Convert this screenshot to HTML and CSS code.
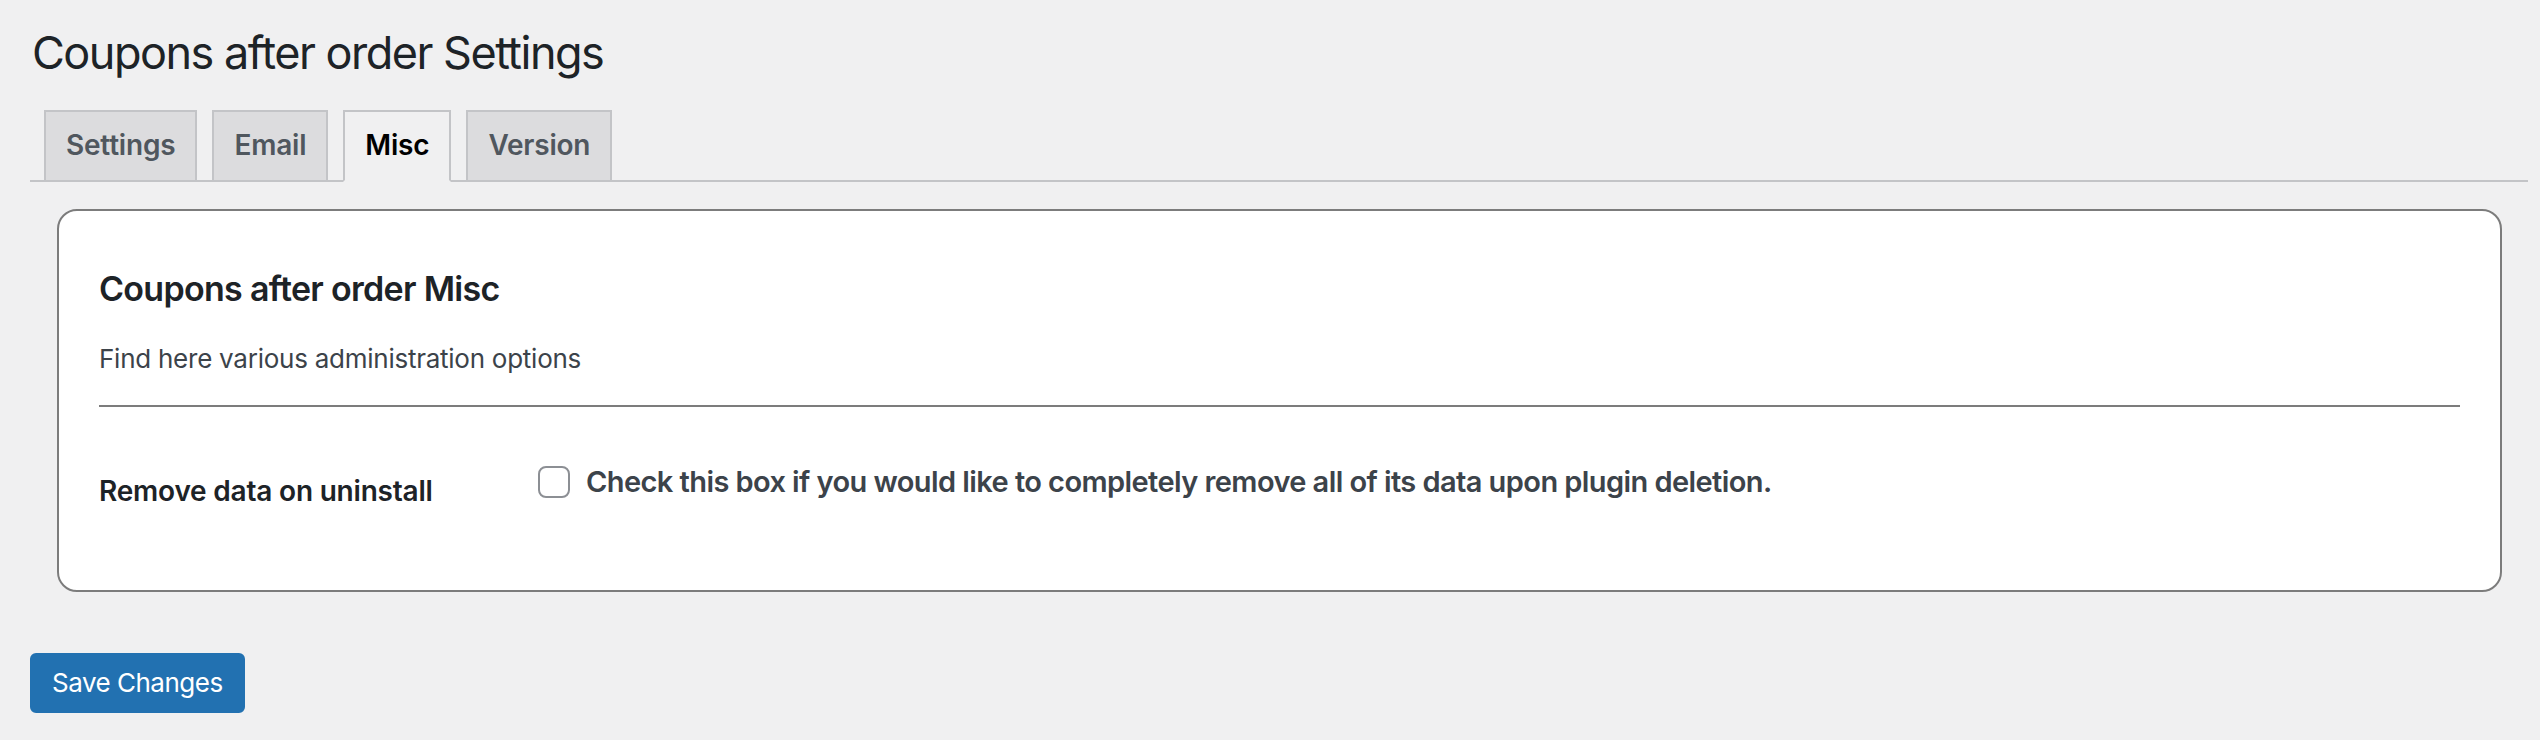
FILE: index.html
```html
<!DOCTYPE html>
<html lang="en">
<head>
<meta charset="utf-8">
<title>Coupons after order Settings</title>
<link rel="stylesheet" href="styles.css">
</head>
<body>
<div class="wrap">
  <h1 class="page-title">Coupons after order Settings</h1>
  <nav class="tabs">
    <a class="tab">Settings</a>
    <a class="tab">Email</a>
    <a class="tab tab-active">Misc</a>
    <a class="tab">Version</a>
  </nav>
  <form class="settings-form">
    <section class="card">
      <h2 class="card-title">Coupons after order Misc</h2>
      <p class="card-desc">Find here various administration options</p>
      <hr class="card-rule">
      <div class="row">
        <div class="row-label">Remove data on uninstall</div>
        <label class="row-field">
          <span class="checkbox"></span>
          <span class="check-text">Check this box if you would like to completely remove all of its data upon plugin deletion.</span>
        </label>
      </div>
    </section>
    <button type="button" class="btn-primary">Save Changes</button>
  </form>
</div>
</body>
</html>
```

FILE: styles.css
```css
html, body {
  margin: 0;
  padding: 0;
  background: #f0f0f1;
}
body {
  font-family: Inter, "Noto Sans", "Liberation Sans", sans-serif;
  color: #3c434a;
}
.wrap {
  padding: 23px 12px 0 30px;
}
.page-title {
  margin: 0;
  padding: 0 0 0 2px;
  font-size: 45px;
  font-weight: 400;
  line-height: 60px;
  letter-spacing: -1.5px;
  color: #1d2327;
}
.tabs {
  display: flex;
  padding: 27px 0 0 0;
  border-bottom: 2px solid #c3c4c7;
}
.tab {
  display: block;
  margin: 0 0 -2px 14px;
  padding: 9px 20px 11px;
  border: 2px solid #c3c4c7;
  background: #dcdcde;
  color: #50575e;
  font-size: 28px;
  font-weight: 600;
  line-height: 48px;
  letter-spacing: -0.2px;
  text-decoration: none;
}
.tab + .tab {
  margin-left: 15px;
}
.tab-active {
  background: #f0f0f1;
  border-bottom-color: #f0f0f1;
  color: #000;
}
.settings-form {
  margin: 0;
}
.card {
  margin: 27px 26px 0 27px;
  padding: 56px 40px 81px;
  background: #fff;
  border: 2px solid #7c7c7c;
  border-radius: 20px;
}
.card-title {
  margin: 0;
  font-size: 34px;
  font-weight: 600;
  line-height: 44px;
  letter-spacing: -0.7px;
  color: #1d2327;
}
.card-desc {
  margin: 30px 0 0;
  font-size: 26px;
  line-height: 36px;
  letter-spacing: -0.25px;
  color: #3c434a;
}
.card-rule {
  margin: 28px 0 0;
  border: 0;
  border-top: 2px solid #7c7c7c;
  height: 0;
}
.row {
  display: flex;
  align-items: flex-start;
  margin-top: 57px;
}
.row-label {
  width: 439px;
  flex: none;
  padding-top: 9px;
  font-size: 28px;
  font-weight: 600;
  line-height: 36px;
  letter-spacing: -0.2px;
  color: #1d2327;
}
.row-field {
  display: flex;
  align-items: flex-start;
  gap: 16px;
}
.checkbox {
  flex: none;
  box-sizing: border-box;
  width: 32px;
  height: 32px;
  margin-top: 2px;
  border: 2px solid #8c8f94;
  border-radius: 8px;
  background: #fff;
}
.check-text {
  font-size: 29px;
  font-weight: 600;
  line-height: 36px;
  letter-spacing: -0.58px;
  color: #3c434a;
}
.btn-primary {
  display: block;
  margin: 61px 0 0 0;
  padding: 0 20px;
  height: 60px;
  border: 2px solid #2271b1;
  border-radius: 6px;
  background: #2271b1;
  color: #fff;
  font-family: inherit;
  font-size: 26px;
  line-height: 56px;
  letter-spacing: -0.5px;
}
```
